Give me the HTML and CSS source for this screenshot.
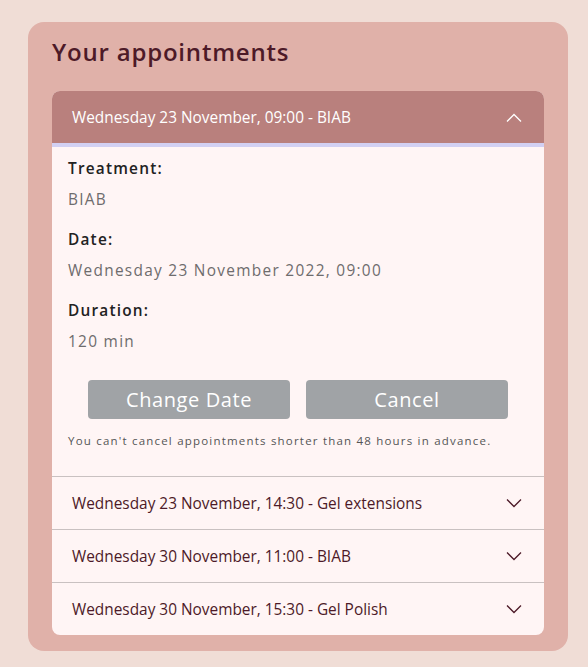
FILE: index.html
```html
<!DOCTYPE html>
<html>
<head>
<meta charset="utf-8">
<link rel="stylesheet" href="styles.css">
</head>
<body>
<section class="card">
  <h1 class="title">Your appointments</h1>
  <div class="accordion">
    <div class="item open">
      <button class="head head-open">
        <span>Wednesday 23 November, 09:00 - BIAB</span>
        <svg class="chev" width="16" height="9" viewBox="0 0 16 9"><path d="M1 8.5 L8 1.5 L15 8.5" fill="none" stroke="currentColor" stroke-width="1.3"/></svg>
      </button>
      <div class="body">
        <dl class="details">
          <dt>Treatment:</dt>
          <dd>BIAB</dd>
          <dt>Date:</dt>
          <dd>Wednesday 23 November 2022, 09:00</dd>
          <dt>Duration:</dt>
          <dd>120 min</dd>
        </dl>
        <div class="actions">
          <button class="btn">Change Date</button>
          <button class="btn">Cancel</button>
        </div>
        <p class="note">You can't cancel appointments shorter than 48 hours in advance.</p>
      </div>
    </div>
    <div class="item">
      <button class="head">
        <span>Wednesday 23 November, 14:30 - Gel extensions</span>
        <svg class="chev" width="16" height="9" viewBox="0 0 16 9"><path d="M1 0.5 L8 7.5 L15 0.5" fill="none" stroke="currentColor" stroke-width="1.3"/></svg>
      </button>
    </div>
    <div class="item">
      <button class="head">
        <span>Wednesday 30 November, 11:00 - BIAB</span>
        <svg class="chev" width="16" height="9" viewBox="0 0 16 9"><path d="M1 0.5 L8 7.5 L15 0.5" fill="none" stroke="currentColor" stroke-width="1.3"/></svg>
      </button>
    </div>
    <div class="item">
      <button class="head">
        <span>Wednesday 30 November, 15:30 - Gel Polish</span>
        <svg class="chev" width="16" height="9" viewBox="0 0 16 9"><path d="M1 0.5 L8 7.5 L15 0.5" fill="none" stroke="currentColor" stroke-width="1.3"/></svg>
      </button>
    </div>
  </div>
</section>
</body>
</html>
```

FILE: styles.css
```css
* { box-sizing: border-box; }
html, body {
  margin: 0;
  padding: 0;
  background: #f0ddd6;
  font-family: "Open Sans", "Noto Sans", sans-serif;
}
body {
  padding: 22px 20px 16px 28px;
}
.card {
  width: 540px;
  background: #e0b1a9;
  border-radius: 16px;
  padding: 14px 24px 16px 24px;
}
.title {
  margin: 0 0 24px 0;
  font-size: 24px;
  line-height: 31px;
  font-weight: 600;
  color: #4d1a28;
  letter-spacing: 0.8px;
}
.accordion {
  background: #fff5f5;
  border-radius: 8px;
  overflow: hidden;
}
.item + .item { border-top: 1px solid #c9c1c1; }
.head {
  display: flex;
  align-items: center;
  justify-content: space-between;
  width: 100%;
  height: 52px;
  padding: 0 22px 0 20px;
  border: 0;
  background: transparent;
  font-family: inherit;
  font-size: 15.4px;
  color: #4d1a28;
  text-align: left;
  cursor: pointer;
}
.head-open {
  height: 56px;
  background: #b9807d;
  color: #ffffff;
  border-bottom: 4px solid #d2d0f3;
}
.chev { display: block; }
.body {
  padding: 12px 16px 27px 16px;
}
.details { margin: 0; }
.details dt {
  font-size: 15.4px;
  line-height: 20px;
  font-weight: 600;
  color: #222;
  letter-spacing: 1.2px;
  margin: 0 0 11px 0;
}
.details dd {
  margin: 0 0 20px 0;
  font-size: 15.4px;
  line-height: 20px;
  color: #6e6c6d;
  letter-spacing: 1.3px;
}
.details dd:last-child { margin-bottom: 28px; }
.actions {
  display: flex;
  justify-content: center;
  gap: 16px;
}
.btn {
  width: 202px;
  height: 39px;
  border: 0;
  border-radius: 4px;
  background: #a0a3a6;
  color: #fff;
  font-family: inherit;
  font-size: 20px;
  letter-spacing: 0.6px;
}
.note {
  margin: 14px 0 0 0;
  font-size: 11.5px;
  line-height: 16px;
  color: #555;
  letter-spacing: 1.2px;
}
```
